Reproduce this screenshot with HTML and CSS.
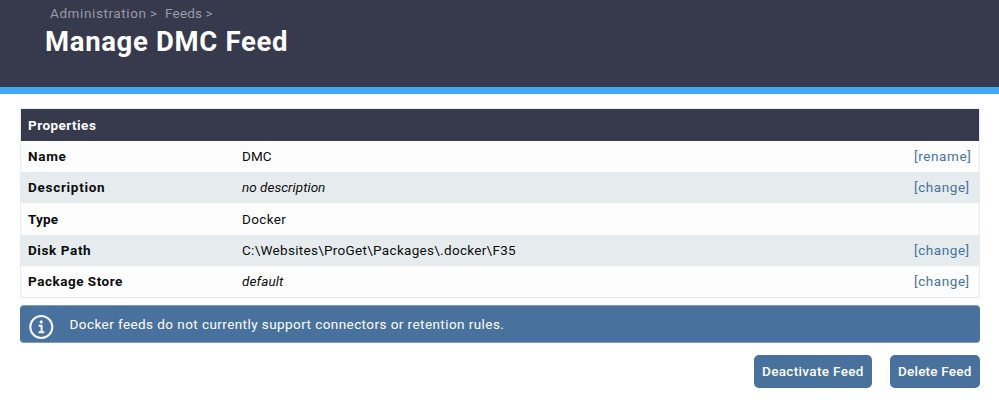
FILE: index.html
```
<!DOCTYPE html>
<html lang="en">
<head>
<meta charset="utf-8">
<title>Manage DMC Feed</title>
<link rel="stylesheet" href="styles.css">
</head>
<body>
<header class="header">
  <nav class="crumbs"><a class="crumb-admin">Administration &gt;</a><a class="crumb-feeds">Feeds &gt;</a></nav>
  <h1 class="title">Manage DMC Feed</h1>
</header>
<main class="main">
  <section class="panel">
    <h2 class="panel-head"><span class="t-properties">Properties</span></h2>
    <div class="row"><b><span class="t-name">Name</span></b><span><span class="t-dmc">DMC</span></span><a><span class="t-rename">[rename]</span></a></div>
    <div class="row alt"><b><span class="t-description">Description</span></b><i><span class="t-nodesc">no description</span></i><a><span class="t-change">[change]</span></a></div>
    <div class="row tall"><b><span class="t-type">Type</span></b><span><span class="t-docker">Docker</span></span></div>
    <div class="row alt"><b><span class="t-disk">Disk Path</span></b><span><span class="t-path">C:\Websites\ProGet\Packages\.docker\F35</span></span><a><span class="t-change">[change]</span></a></div>
    <div class="row"><b><span class="t-store">Package Store</span></b><i><span class="t-default">default</span></i><a><span class="t-change">[change]</span></a></div>
  </section>
  <div class="notice">
    <svg class="info" viewBox="0 0 26 26" width="26" height="26" fill="none" stroke="#f4f7fa">
      <circle cx="13.3" cy="13" r="11" stroke-width="2.1"/>
      <circle cx="13.2" cy="7.9" r="1.6" fill="#f4f7fa" stroke="none"/>
      <path d="M10.5 11.8h3.1v6.1M10.5 18.2h5.8" stroke-width="2"/>
    </svg>
    <span class="t-notice">Docker feeds do not currently support connectors or retention rules.</span>
  </div>
  <div class="actions">
    <button class="btn deactivate"><span class="t-deactivate">Deactivate Feed</span></button>
    <button class="btn delete"><span class="t-delete">Delete Feed</span></button>
  </div>
</main>
</body>
</html>
```
FILE: styles.css
```
* { box-sizing: border-box; }
body { margin: 0; background: #fff; color: #0c0c0c; font: 13.5px/20px Roboto, "Liberation Sans", sans-serif; }
.header { height: 94px; padding: 3px 0 0 45px; background: #37394c; border-bottom: 7px solid #3fa9f5; }
.crumbs { display: flex; gap: 8px; height: 21px; padding-left: 5px; color: #9a9ba7; white-space: nowrap; }
.crumb-admin { width: 107px; letter-spacing: .6px; word-spacing: -.6px; }
.crumb-feeds { letter-spacing: .2px; word-spacing: -.2px; }
.title { margin: 0; color: #fff; font-size: 27.5px; line-height: 36px; font-weight: 700; letter-spacing: .67px; }
.main { padding: 14px 19px 0 20px; }
.panel { height: 190px; border: 1px solid #e6ecee; background: #fdfdfd; }
.panel-head { height: 32px; margin: 0; padding: 0 7px; background: #37394c; color: #fff; font-size: 13.5px; line-height: 33px; font-weight: 700; }
.row { display: grid; grid-template-columns: 214px 1fr 65px; height: 31px; padding-left: 7px; line-height: 31px; white-space: nowrap; }
.row.tall { height: 32px; line-height: 33px; }
.row.alt { background: #e6ecee; }
.row a { color: #48719d; }
.notice { display: flex; gap: 15.5px; height: 38px; margin-top: 7px; padding-left: 8px; border: 1px solid #7f9cbc; border-width: 1px 0; border-radius: 4px; background: #48719d; color: #fff; line-height: 37px; }
.info { margin-top: 8px; }
.actions { display: flex; justify-content: flex-end; gap: 18px; margin-top: 12px; }
.btn { height: 33px; padding: 0 0 2px 8px; border: 0; border-radius: 5px; background: #48719d; color: #fff; font: inherit; font-weight: 500; text-align: left; white-space: nowrap; }
.deactivate { width: 118px; }
.delete { width: 90px; }

/* Tracking per label */
.t-properties { letter-spacing: .47px; }
.t-name { letter-spacing: .7px; }
.t-description { letter-spacing: .72px; }
.t-type { letter-spacing: .2px; }
.t-disk { letter-spacing: .6px; }
.t-store { letter-spacing: .52px; }
.t-dmc { letter-spacing: .1px; }
.t-nodesc { letter-spacing: .02px; }
.t-docker { letter-spacing: .35px; }
.t-default { letter-spacing: .1px; }
.t-path { letter-spacing: .3px; }
.t-rename { letter-spacing: .6px; }
.t-change { letter-spacing: .57px; }
.t-notice { letter-spacing: .43px; }
.t-deactivate { letter-spacing: .34px; }
.t-delete { letter-spacing: .22px; }
```
